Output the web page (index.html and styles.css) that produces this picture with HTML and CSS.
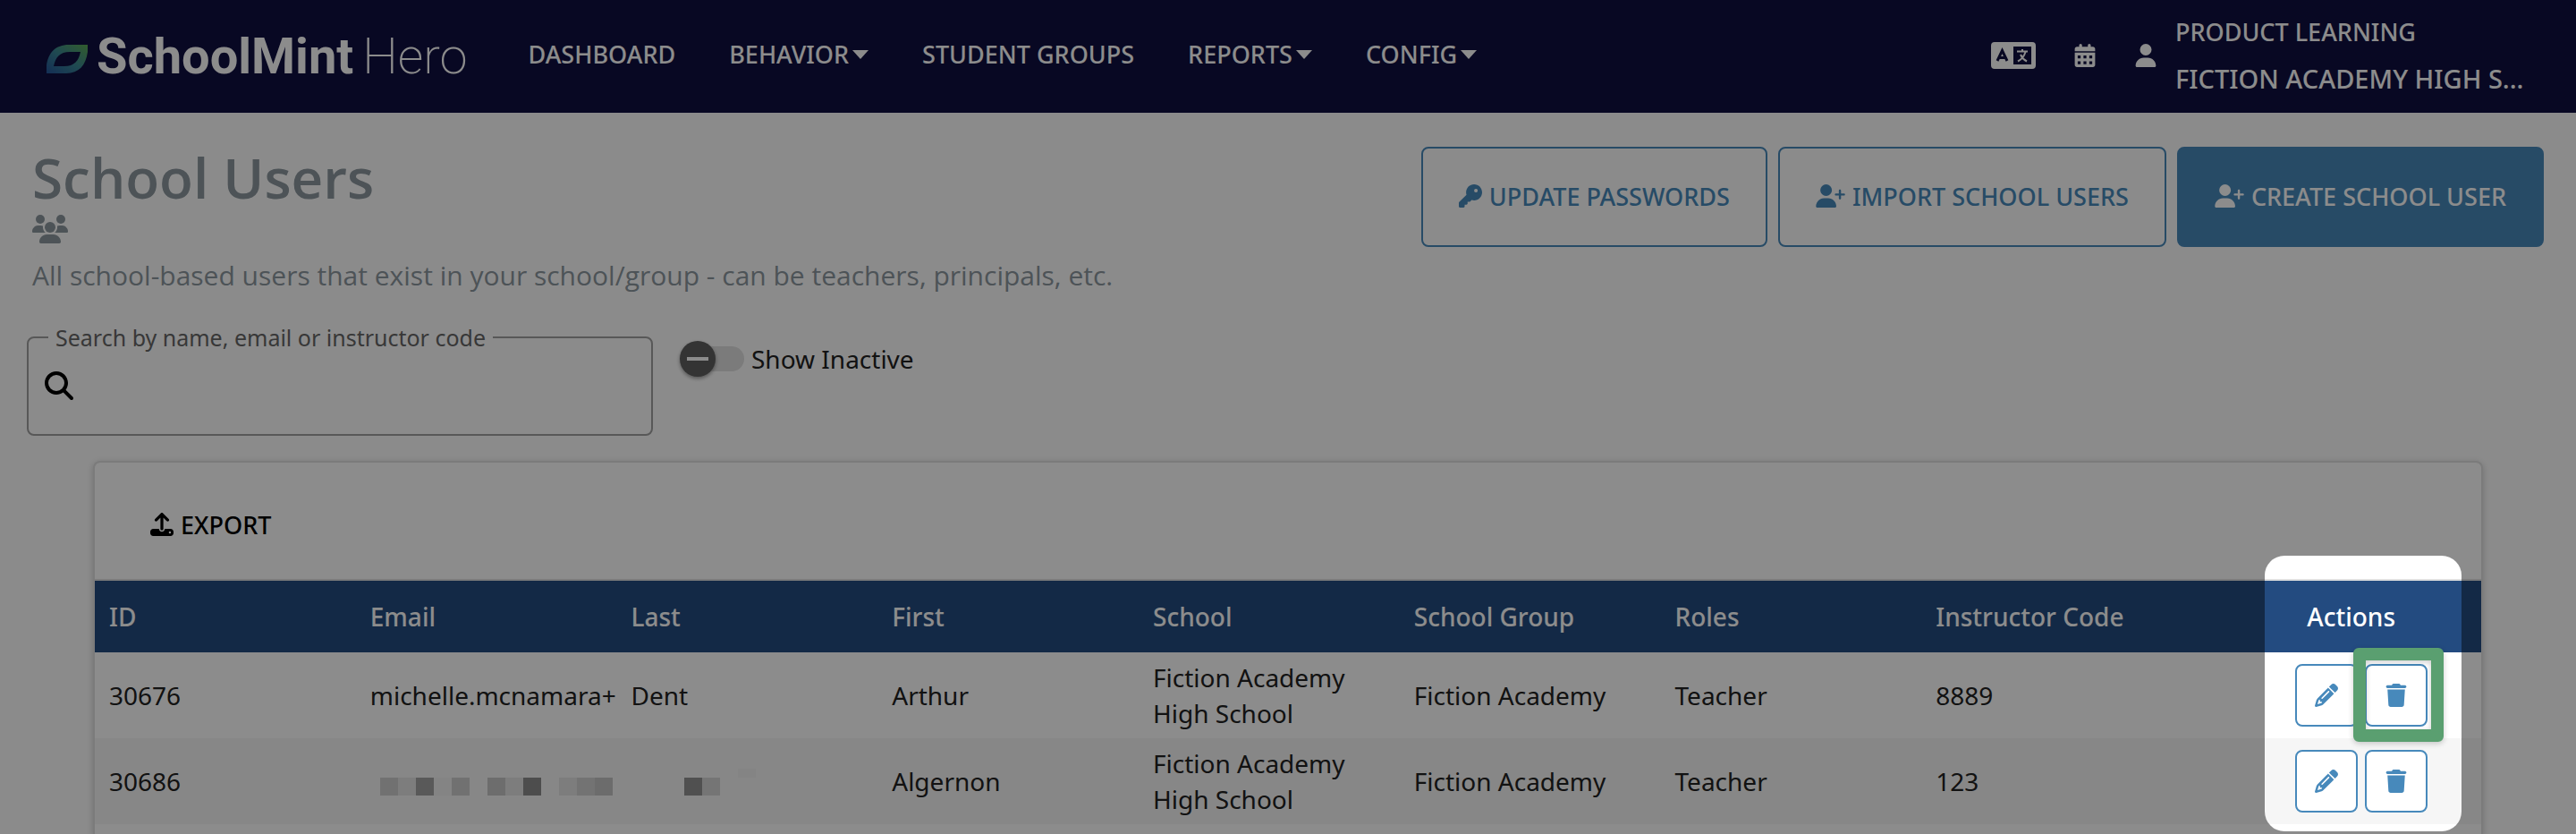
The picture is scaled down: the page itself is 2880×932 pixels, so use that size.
FILE: index.html
```html
<!DOCTYPE html>
<html lang="en">
<head>
    <meta charset="UTF-8">
    <meta name="viewport" content="width=device-width, initial-scale=1.0">
    <title>School Users</title>
    <link rel="stylesheet" href="styles.css">
</head>
<body>

    <!-- Icon set -->
    <svg class="sprite" aria-hidden="true">
        <symbol id="icon-user" viewBox="0 0 448 512">
            <path d="M224 256A128 128 0 1 0 224 0a128 128 0 1 0 0 256zm-45.7 48C79.8 304 0 383.8 0 482.3C0 498.7 13.3 512 29.7 512H418.3c16.4 0 29.7-13.3 29.7-29.7C448 383.8 368.2 304 269.7 304H178.3z"/>
        </symbol>
        <symbol id="icon-user-plus" viewBox="0 0 640 512">
            <path d="M96 128a128 128 0 1 1 256 0A128 128 0 1 1 96 128zM0 482.3C0 383.8 79.8 304 178.3 304h91.4C368.2 304 448 383.8 448 482.3c0 16.4-13.3 29.7-29.7 29.7H29.7C13.3 512 0 498.7 0 482.3zM504 312V248H440c-13.3 0-24-10.7-24-24s10.7-24 24-24h64V136c0-13.3 10.7-24 24-24s24 10.7 24 24v64h64c13.3 0 24 10.7 24 24s-10.7 24-24 24H552v64c0 13.3-10.7 24-24 24s-24-10.7-24-24z"/>
        </symbol>
        <symbol id="icon-key" viewBox="0 0 512 512">
            <path d="M336 352c97.2 0 176-78.8 176-176S433.2 0 336 0S160 78.8 160 176c0 18.7 2.9 36.8 8.3 53.7L7 391c-4.5 4.5-7 10.6-7 17v80c0 13.3 10.7 24 24 24h80c13.3 0 24-10.7 24-24V448h40c13.3 0 24-10.7 24-24V384h40c6.4 0 12.5-2.5 17-7l33.3-33.3c16.9 5.4 35 8.3 53.7 8.3zM376 96a40 40 0 1 1 0 80 40 40 0 1 1 0-80z"/>
        </symbol>
        <symbol id="icon-search" viewBox="0 0 512 512">
            <path d="M416 208c0 45.9-14.9 88.3-40 122.7L502.6 457.4c12.5 12.5 12.5 32.8 0 45.3s-32.8 12.5-45.3 0L330.7 376c-34.4 25.2-76.8 40-122.7 40C93.1 416 0 322.9 0 208S93.1 0 208 0S416 93.1 416 208zM208 352a144 144 0 1 0 0-288 144 144 0 1 0 0 288z"/>
        </symbol>
        <symbol id="icon-pencil" viewBox="0 0 512 512">
            <path d="M410.3 231l11.3-11.3-33.9-33.9-62.1-62.1L291.7 89.8l-11.3 11.3-22.6 22.6L58.6 322.9c-10.4 10.4-18 23.3-22.2 37.4L1 480.7c-2.5 8.4-.2 17.5 6.1 23.7s15.3 8.5 23.7 6.1l120.3-35.4c14.1-4.2 27-11.8 37.4-22.2L387.7 253.7 410.3 231zM160 399.4l-9.1 22.7c-4 3.1-8.5 5.4-13.3 6.9L59.4 452l23-78.1c1.4-4.9 3.8-9.4 6.9-13.3l22.7-9.1v32c0 8.8 7.2 16 16 16h32zM362.7 18.7L348.3 33.2 325.7 55.8 314.3 67.1l33.9 33.9 62.1 62.1 33.9 33.9 11.3-11.3 22.6-22.6 14.5-14.5c25-25 25-65.5 0-90.5L453.3 18.7c-25-25-65.5-25-90.5 0zm-47.4 168l-144 144c-6.2 6.2-16.4 6.2-22.6 0s-6.2-16.4 0-22.6l144-144c6.2-6.2 16.4-6.2 22.6 0s6.2 16.4 0 22.6z"/>
        </symbol>
        <symbol id="icon-trash" viewBox="0 0 448 512">
            <path d="M135.2 17.7C140.6 6.8 151.7 0 163.8 0H284.2c12.1 0 23.2 6.8 28.6 17.7L320 32h96c17.7 0 32 14.3 32 32s-14.3 32-32 32H32C14.3 96 0 81.7 0 64S14.3 32 32 32h96l7.2-14.3zM32 128H416L394.8 467c-1.6 25.3-22.6 45-47.9 45H101.1c-25.3 0-46.3-19.7-47.9-45L32 128z"/>
        </symbol>
        <symbol id="icon-export" viewBox="0 0 512 512">
            <path d="M288 109.300V352c0 17.700-14.300 32-32 32s-32-14.300-32-32V109.300l-73.400 73.400c-12.500 12.500-32.800 12.500-45.300 0s-12.500-32.800 0-45.300l128-128c12.500-12.500 32.800-12.500 45.300 0l128 128c12.500 12.500 12.500 32.800 0 45.300s-32.800 12.500-45.300 0L288 109.300zM64 352H192c0 35.300 28.700 64 64 64s64-28.700 64-64H448c35.300 0 64 28.700 64 64v32c0 35.300-28.700 64-64 64H64c-35.300 0-64-28.700-64-64V416c0-35.300 28.700-64 64-64zM432 456a24 24 0 1 0 0-48 24 24 0 1 0 0 48z"/>
        </symbol>
        <symbol id="icon-calendar" viewBox="0 0 448 512">
            <path fill-rule="evenodd" d="M128 0c17.700 0 32 14.300 32 32V64H288V32c0-17.700 14.300-32 32-32s32 14.300 32 32V64h48c26.500 0 48 21.500 48 48v48H0V112C0 85.500 21.500 64 48 64H96V32c0-17.700 14.300-32 32-32zM0 192H448V464c0 26.500-21.500 48-48 48H48c-26.500 0-48-21.500-48-48V192zM64 256v64h64v-64zM192 256v64h64v-64zM320 256v64h64v-64zM64 384v64h64v-64zM192 384v64h64v-64zM320 384v64h64v-64z"/>
        </symbol>
        <symbol id="icon-language" viewBox="0 0 50 30">
            <path fill-rule="evenodd" d="M4 0H46a4 4 0 0 1 4 4V26a4 4 0 0 1-4 4H4a4 4 0 0 1-4-4V4a4 4 0 0 1 4-4zM25 5V25H45V5z"/>
            <path class="glyph-dark" d="M7 21L12.500 9.500L18 21M9 17.500H16"/>
            <path class="glyph-light" d="M29 10.500H41M35 8V10.500M38.500 11C37 16 34 19.500 30 21.500M33 14C34.500 17.500 37 20 40 21.500"/>
        </symbol>
        <symbol id="icon-users" viewBox="0 0 640 512">
            <circle cx="144" cy="80" r="80"/>
            <circle cx="512" cy="80" r="80"/>
            <circle cx="320" cy="224" r="96"/>
            <path d="M0 298.700C0 239.800 47.800 192 106.700 192h42.700c15.900 0 31 3.500 44.600 9.700-1.300 7.200-1.900 14.700-1.900 22.300 0 38.200 16.800 72.500 43.300 96H21.300C9.600 320 0 310.400 0 298.700zM405.300 320c26.600-23.500 43.300-57.800 43.300-96 0-7.600-.7-15-1.900-22.300 13.600-6.300 28.700-9.700 44.600-9.700h42.700C592.200 192 640 239.800 640 298.700c0 11.800-9.600 21.300-21.300 21.300H405.300zM128 485.300C128 411.700 187.700 352 261.300 352H378.700C452.300 352 512 411.700 512 485.300c0 14.700-11.900 26.700-26.700 26.700H154.700c-14.700 0-26.700-11.900-26.700-26.700z"/>
        </symbol>
    </svg>

    <header class="navbar">
        <a class="brand" href="#">
            <svg class="brand-leaf" viewBox="0 0 46 32" aria-hidden="true">
                <defs>
                    <linearGradient id="leaf" x1="0" y1="1" x2="1" y2="0">
                        <stop offset="0" stop-color="#24549b"/>
                        <stop offset="0.5" stop-color="#3a8794"/>
                        <stop offset="1" stop-color="#5ba953"/>
                    </linearGradient>
                </defs>
                <path fill="url(#leaf)" fill-rule="evenodd" d="M0 32V23C2 9 10 0 25 0H46V8C44 23 36 32 22 32ZM8 24H20C31 24 36 18 38 8H26C15 8 10 14 8 24Z"/>
            </svg>
            <span class="brand-name">SchoolMint</span>
            <span class="brand-product">Hero</span>
        </a>
        <nav class="menu">
            <a href="#">DASHBOARD</a>
            <a href="#">BEHAVIOR<span class="caret"></span></a>
            <a href="#">STUDENT GROUPS</a>
            <a href="#">REPORTS<span class="caret"></span></a>
            <a href="#">CONFIG<span class="caret"></span></a>
        </nav>
        <div class="account">
            <button class="icon-btn" aria-label="Language"><svg class="icon-lang"><use href="#icon-language"/></svg></button>
            <button class="icon-btn" aria-label="Calendar"><svg class="icon"><use href="#icon-calendar"/></svg></button>
            <button class="icon-btn" aria-label="Account"><svg class="icon"><use href="#icon-user"/></svg></button>
            <div class="account-info">
                <span class="account-name">PRODUCT LEARNING</span>
                <span class="account-school">FICTION ACADEMY HIGH S...</span>
            </div>
        </div>
    </header>

    <main>
        <section class="page-head">
            <div class="page-title">
                <h1>School Users</h1>
                <svg class="icon-group"><use href="#icon-users"/></svg>
                <p>All school-based users that exist in your school/group - can be teachers, principals, etc.</p>
            </div>
            <div class="buttons">
                <button class="btn"><svg class="icon"><use href="#icon-key"/></svg>UPDATE PASSWORDS</button>
                <button class="btn"><svg class="icon icon-wide"><use href="#icon-user-plus"/></svg>IMPORT SCHOOL USERS</button>
                <button class="btn btn-primary"><svg class="icon icon-wide"><use href="#icon-user-plus"/></svg>CREATE SCHOOL USER</button>
            </div>
        </section>

        <section class="filters">
            <fieldset class="search-box">
                <legend><label for="search">Search by name, email or instructor code</label></legend>
                <svg class="icon-search"><use href="#icon-search"/></svg>
                <input type="text" id="search">
            </fieldset>
            <div class="toggle">
                <input type="checkbox" id="showInactive">
                <label for="showInactive">Show Inactive</label>
            </div>
        </section>

        <section class="card">
            <div class="toolbar">
                <button class="btn-export"><svg class="icon"><use href="#icon-export"/></svg>EXPORT</button>
            </div>
            <div class="table-wrap">
                <table>
                    <thead>
                        <tr>
                            <th>ID</th>
                            <th>Email</th>
                            <th>Last</th>
                            <th>First</th>
                            <th>School</th>
                            <th>School Group</th>
                            <th>Roles</th>
                            <th>Instructor Code</th>
                            <th class="actions">Actions</th>
                        </tr>
                    </thead>
                    <tbody>
                        <tr>
                            <td>30676</td>
                            <td class="email">michelle.mcnamara+</td>
                            <td>Dent</td>
                            <td>Arthur</td>
                            <td>Fiction Academy High School</td>
                            <td>Fiction Academy</td>
                            <td>Teacher</td>
                            <td>8889</td>
                            <td class="actions">
                                <div class="row-buttons">
                                    <button class="btn-row" aria-label="Edit"><svg class="icon"><use href="#icon-pencil"/></svg></button>
                                    <button class="btn-row marked" aria-label="Delete"><svg class="icon"><use href="#icon-trash"/></svg></button>
                                </div>
                            </td>
                        </tr>
                        <tr>
                            <td>30686</td>
                            <td>
                                <svg class="redacted" viewBox="0 0 260 20">
                                    <rect x="0" width="20" height="20" fill="#cecece"/>
                                    <rect x="20" width="20" height="20" fill="#e4e4e4"/>
                                    <rect x="40" width="20" height="20" fill="#a2a2a2"/>
                                    <rect x="60" width="20" height="20" fill="#f1f1f1"/>
                                    <rect x="80" width="20" height="20" fill="#cecece"/>
                                    <rect x="120" width="20" height="20" fill="#c7c7c7"/>
                                    <rect x="140" width="20" height="20" fill="#e4e4e4"/>
                                    <rect x="160" width="20" height="20" fill="#8d8d8d"/>
                                    <rect x="200" width="20" height="20" fill="#e4e4e4"/>
                                    <rect x="220" width="20" height="20" fill="#d2d2d2"/>
                                    <rect x="240" width="20" height="20" fill="#c5c5c5"/>
                                </svg>
                            </td>
                            <td>
                                <svg class="redacted redacted-name" viewBox="0 0 80 30">
                                    <rect x="0" y="10" width="20" height="20" fill="#929292"/>
                                    <rect x="20" y="10" width="20" height="20" fill="#d6d6d6"/>
                                    <rect x="60" y="0" width="20" height="10" fill="#f0f0f0"/>
                                </svg>
                            </td>
                            <td>Algernon</td>
                            <td>Fiction Academy High School</td>
                            <td>Fiction Academy</td>
                            <td>Teacher</td>
                            <td>123</td>
                            <td class="actions">
                                <div class="row-buttons">
                                    <button class="btn-row" aria-label="Edit"><svg class="icon"><use href="#icon-pencil"/></svg></button>
                                    <button class="btn-row" aria-label="Delete"><svg class="icon"><use href="#icon-trash"/></svg></button>
                                </div>
                            </td>
                        </tr>
                    </tbody>
                </table>
                <!-- Tour step: dims the page around the actions column -->
                <div class="spotlight"></div>
            </div>
        </section>
    </main>

</body>
</html>
```
FILE: styles.css
```css
*, *::before, *::after {
    box-sizing: border-box;
}
html, body {
    height: 100%;
}
body {
    margin: 0;
    overflow: hidden;
    font-family: "Noto Sans", "Open Sans", sans-serif;
    font-size: 28px;
    line-height: 40px;
    background-color: #fefefe;
    color: #212121;
}
button, input {
    font-family: inherit;
}
button {
    cursor: pointer;
}
svg {
    fill: currentColor;
}
.sprite {
    position: absolute;
    width: 0;
    height: 0;
}
.icon {
    width: 26px;
    height: 26px;
}
.icon-wide {
    width: 33px;
}

/* Navbar */
.navbar {
    display: flex;
    align-items: center;
    height: 126px;
    padding: 0 52px;
    background-color: #100f40;
    color: white;
}
.brand {
    display: flex;
    align-items: center;
    color: white;
    text-decoration: none;
    font-family: Roboto, sans-serif;
    font-size: 56px;
}
.brand-leaf {
    width: 46px;
    height: 32px;
    margin: 6px 10px 0 0;
}
.brand-name {
    font-weight: 700;
}
.brand-product {
    margin-left: 10px;
    font-weight: 200;
}
.menu {
    display: flex;
    gap: 60px;
    margin-left: 68px;
    padding-bottom: 4px;
}
.menu a {
    display: flex;
    align-items: center;
    color: white;
    font-size: 27px;
    font-weight: 500;
    text-decoration: none;
}
.caret {
    margin-left: 4px;
    border: 9px solid transparent;
    border-top: 10px solid white;
    border-bottom: 0;
}
.account {
    display: flex;
    align-items: center;
    margin-left: auto;
    padding-bottom: 2px;
}
.icon-btn {
    display: flex;
    padding: 0;
    margin-right: 42px;
    border: none;
    background: none;
    color: white;
}
.icon-btn:last-of-type {
    margin-right: 20px;
}
.icon-lang {
    width: 50px;
    height: 30px;
}
.glyph-dark, .glyph-light {
    fill: none;
    stroke: #100f40;
    stroke-width: 3;
}
.glyph-light {
    stroke: white;
    stroke-width: 2;
}
.account-info {
    display: flex;
    flex-direction: column;
    gap: 12px;
    width: 396px;
    font-weight: 500;
    white-space: nowrap;
}
.account-name {
    font-size: 27px;
}
.account-school {
    font-size: 29px;
}

/* Page heading */
.page-head {
    display: flex;
    justify-content: space-between;
    align-items: flex-start;
    padding: 38px 36px 0;
}
.page-title {
    color: #8c979e;
    font-family: "Open Sans", sans-serif;
    font-size: 30px;
}
h1 {
    margin: 0;
    font-size: 62px;
    font-weight: 600;
    line-height: 68px;
}
.page-title p {
    margin: 16px 0 0;
}
.icon-group {
    display: block;
    width: 40px;
    height: 32px;
    margin-top: 8px;
}
.buttons {
    display: flex;
    gap: 12px;
}
.btn {
    display: flex;
    align-items: center;
    gap: 8px;
    height: 112px;
    padding: 0 40px 2px;
    border: 2px solid #4789bb;
    border-radius: 8px;
    background: none;
    color: #4789bb;
    font-size: 27px;
    font-weight: 500;
}
.btn-primary {
    background-color: #4789bb;
    color: white;
}

/* Filters */
.filters {
    display: flex;
    align-items: flex-start;
    gap: 30px;
    padding: 37px 30px 0;
}
.search-box {
    display: flex;
    align-items: center;
    gap: 12px;
    width: 700px;
    height: 122px;
    margin: 0;
    padding: 0 18px 12px;
    border: 2px solid #a0a0a0;
    border-radius: 8px;
}
.search-box legend {
    margin-left: 4px;
    padding: 0 8px;
    color: #666;
    font-size: 25px;
    line-height: 24px;
}
.icon-search {
    width: 32px;
    height: 32px;
    color: black;
}
.search-box input {
    flex: 1;
    border: none;
    outline: none;
    background: none;
    font-size: 28px;
}
.toggle {
    display: flex;
    align-items: center;
    gap: 8px;
    padding-top: 16px;
}
.toggle input {
    appearance: none;
    display: flex;
    align-items: center;
    width: 72px;
    height: 40px;
    margin: 0;
}
.toggle input::before {
    content: "";
    z-index: 1;
    width: 40px;
    height: 40px;
    border-radius: 50%;
    background: linear-gradient(white, white) center / 24px 4px no-repeat #5f5f5f;
    box-shadow: 0 2px 4px rgba(0, 0, 0, 0.4);
}
.toggle input::after {
    content: "";
    width: 50px;
    height: 28px;
    margin-left: -18px;
    border-radius: 14px;
    background-color: #e0e0e0;
}

/* Table card */
.card {
    margin: 28px 104px 0;
    border: 2px solid #e0e0e0;
    border-bottom: 0;
    border-radius: 8px 8px 0 0;
    box-shadow: 0 2px 8px rgba(0, 0, 0, 0.2);
    background-color: white;
}
.toolbar {
    display: flex;
    align-items: center;
    height: 132px;
    padding: 8px 0 0 62px;
    border-bottom: 2px solid #e0e0e0;
}
.btn-export {
    display: flex;
    align-items: center;
    gap: 8px;
    padding: 0;
    border: none;
    background: none;
    font-size: 27px;
    font-weight: 500;
    color: black;
}
.table-wrap {
    position: relative;
    min-height: 284px;
}
table {
    width: 100%;
    border-collapse: collapse;
    table-layout: fixed;
}
th, td {
    padding: 8px 0 8px 16px;
    text-align: left;
}
th {
    height: 80px;
    background-color: #234b80;
    color: white;
    font-weight: 500;
}
td {
    height: 96px;
}
tbody tr:nth-child(even) {
    background-color: #f6f6f6;
}
th.actions {
    width: 334px;
    padding: 0 96px 0 0;
    text-align: right;
}
td.actions {
    padding: 0 60px 0 0;
}
.email {
    white-space: nowrap;
}
.redacted {
    display: block;
    width: 260px;
    height: 20px;
    margin: 12px 0 0 11px;
}
.redacted-name {
    width: 80px;
    height: 30px;
    margin: 2px 0 0 59px;
}
.row-buttons {
    display: flex;
    justify-content: flex-end;
    gap: 8px;
}
.btn-row {
    position: relative;
    display: flex;
    align-items: center;
    justify-content: center;
    width: 70px;
    height: 70px;
    padding: 0;
    border: 2px solid #4789bb;
    border-radius: 8px;
    background-color: white;
    color: #4789bb;
}
.marked::after {
    content: "";
    position: absolute;
    z-index: 2;
    top: -20px;
    left: -15px;
    width: 101px;
    height: 105px;
    border: 14px solid #5a9f70;
    border-radius: 6px;
    box-shadow: 0 2px 6px rgba(0, 0, 0, 0.2), inset 0 2px 6px rgba(0, 0, 0, 0.2);
}
.spotlight {
    position: absolute;
    z-index: 1;
    top: -28px;
    right: 22px;
    width: 220px;
    height: 308px;
    border-radius: 22px;
    box-shadow: 0 0 0 3000px rgba(0, 0, 0, 0.45);
    pointer-events: none;
}
```
